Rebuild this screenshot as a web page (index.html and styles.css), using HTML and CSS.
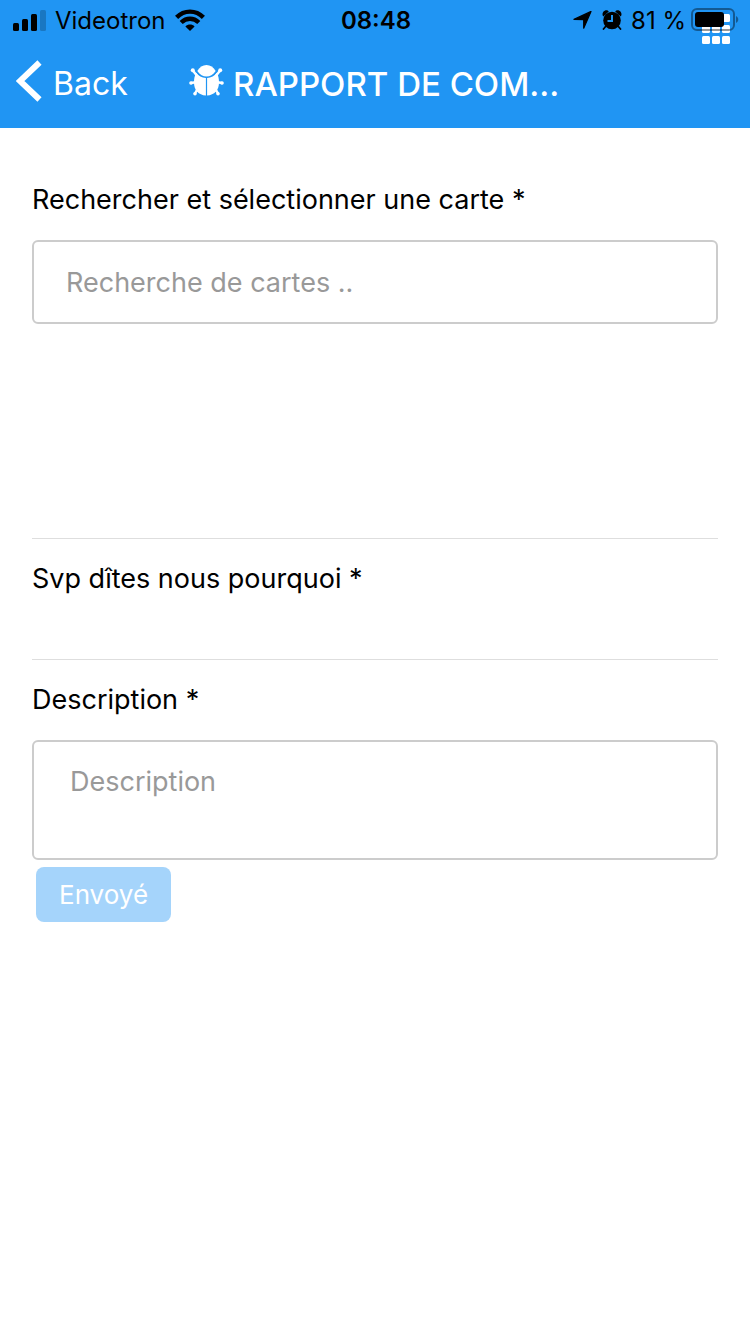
FILE: index.html
```html
<!DOCTYPE html>
<html lang="fr">
<head>
<meta charset="utf-8">
<meta name="viewport" content="width=device-width, initial-scale=1">
<title>Rapport de commentaires</title>
<link rel="stylesheet" href="styles.css">
</head>
<body>
<header class="header">
  <div class="status">
    <div class="status-left">
      <svg class="signal" viewBox="0 0 33 21" aria-hidden="true">
        <rect x="0" y="13" width="6" height="8" rx="1.5"/>
        <rect x="9" y="9" width="6" height="12" rx="1.5"/>
        <rect x="18" y="4" width="6" height="17" rx="1.5"/>
        <rect x="27" y="0" width="6" height="21" rx="1.5" opacity=".2"/>
      </svg>
      <span class="status-text">Videotron</span>
      <svg class="wifi" viewBox="0 0 30 22" aria-hidden="true">
        <g fill="none" stroke="#000" stroke-width="4.400">
          <path d="M1.600 8.400C9.200.7 20.800.7 28.400 8.400"/>
          <path d="M6.200 13.500C11.400 8.500 18.600 8.500 23.800 13.500"/>
        </g>
        <path d="M15 22l-4.600-4.600c2.600-2.600 6.600-2.600 9.200 0z"/>
      </svg>
    </div>
    <time class="status-text clock">08:48</time>
    <div class="status-right">
      <svg class="location" viewBox="0 0 19 18" aria-hidden="true">
        <path d="M18 .4L10.700 17.200V8.600L1 8.400z" stroke="#000" stroke-width="1.200" stroke-linejoin="round"/>
      </svg>
      <svg class="alarm" viewBox="0 0 20 20" aria-hidden="true">
        <path d="M1.300 6.500C-.2 4.500.5 1.700 2.700.7 4.300 0 5.900.4 6.800 1.600zM18.700 6.500c1.500-2 .8-4.800-1.400-5.800-1.600-.7-3.200-.3-4.100.9z"/>
        <circle cx="10" cy="10.500" r="8.800"/>
        <path d="M4 16l-2.500 3M16 16l2.500 3" stroke="#000" stroke-width="1.800" stroke-linecap="round"/>
        <path class="alarm-hands" d="M10 5v6H5.500"/>
      </svg>
      <span class="status-text percent">81 %</span>
      <svg class="battery" viewBox="0 0 48 24" aria-hidden="true">
        <rect x="1" y="1" width="42" height="21" rx="5" fill="none" stroke="#000" stroke-width="2" opacity=".4"/>
        <rect x="4" y="4" width="29" height="15" rx="3"/>
        <path d="M45 8c3 1.500 3 5.500 0 7z" opacity=".4"/>
      </svg>
    </div>
  </div>
  <nav class="nav">
    <button class="back" type="button">
      <svg class="chevron" viewBox="0 0 26 42" aria-hidden="true"><path d="M23.500 2.500L4 21l19.500 18.500"/></svg>
      Back
    </button>
    <h1 class="title">
      <svg class="bug" viewBox="0 0 35 31" aria-hidden="true">
        <g fill="none" stroke="#fff" stroke-width="2.400" stroke-linecap="round">
          <path d="M9 12L3.800 5.500M26 12l5.200-6.500M8 17L2 18M27 17l6 1M9.500 22L6 28.500M25.500 22l3.500 6.500"/>
        </g>
        <g fill="#fff">
          <circle cx="3.800" cy="5.200" r="2"/><circle cx="31.200" cy="5.200" r="2"/>
          <circle cx="2" cy="18" r="1.800"/><circle cx="33" cy="18" r="1.800"/>
          <circle cx="6" cy="28.800" r="1.800"/><circle cx="29" cy="28.800" r="1.800"/>
          <path d="M8.300 6C10.500 2 13.700 0 17.500 0s7 2 9.200 6c-2.700 3.800-5.700 5.600-9.200 5.600S11 9.800 8.300 6z"/>
          <path d="M7.200 7.700c2.400 3.300 5.600 5 9.700 5.200V30.600C9.500 30 5 25 5 17.500c0-4 .6-7 2.200-9.800zM27.800 7.700c-2.400 3.300-5.600 5-9.700 5.200V30.600C25.500 30 30 25 30 17.500c0-4-.6-7-2.200-9.800z"/>
        </g>
      </svg>
      <span class="title-text">RAPPORT DE COM...</span>
    </h1>
  </nav>
  <button class="menu" type="button" aria-label="Menu">
    <svg class="menu-icon" viewBox="0 0 28 30" aria-hidden="true">
      <rect x="0" y="0" width="8" height="8" rx="1.500"/><rect x="10" y="0" width="8" height="8" rx="1.500"/><rect x="20" y="0" width="8" height="8" rx="1.500"/>
      <rect x="0" y="11" width="8" height="8" rx="1.500"/><rect x="10" y="11" width="8" height="8" rx="1.500"/><rect x="20" y="11" width="8" height="8" rx="1.500"/>
      <rect x="0" y="22" width="8" height="8" rx="1.500"/><rect x="10" y="22" width="8" height="8" rx="1.500"/><rect x="20" y="22" width="8" height="8" rx="1.500"/>
    </svg>
  </button>
</header>
<main>
  <form class="form">
    <section class="group group-search">
      <label class="label" for="card">Rechercher et sélectionner une carte *</label>
      <input class="field" id="card" type="text" placeholder="Recherche de cartes ..">
    </section>
    <section class="group group-reason">
      <h2 class="label">Svp dîtes nous pourquoi *</h2>
    </section>
    <section class="group">
      <label class="label" for="description">Description *</label>
      <textarea class="field area" id="description" placeholder="Description"></textarea>
    </section>
    <button class="submit" type="submit" disabled>Envoyé</button>
  </form>
</main>
</body>
</html>
```

FILE: styles.css
```css
* { box-sizing: border-box; }

body {
  margin: 0;
  background: #fff;
  color: #000;
  font-family: Inter, "Liberation Sans", sans-serif;
}

button, input, textarea { font: inherit; }
svg { display: block; flex: none; }

.header {
  position: relative;
  background: #2095f3;
}

.status {
  position: relative;
  z-index: 1;
  display: grid;
  grid-template-columns: 1fr auto 1fr;
  align-items: center;
  height: 40px;
  padding: 0 11px 0 13px;
  font-size: 24px;
  line-height: 38px;
  pointer-events: none;
}

.status-left, .status-right {
  display: flex;
  align-items: center;
}

.status-left { gap: 9px; }
.status-right { justify-content: flex-end; }
.status-text { padding-top: 2px; }
.signal { width: 33px; height: 21px; }
.wifi { width: 30px; height: 22px; }
.clock { font-weight: 600; }
.location { width: 19px; height: 18px; margin-right: 10px; }
.alarm { width: 20px; height: 20px; margin-right: 9px; }
.alarm-hands { fill: none; stroke: #2095f3; stroke-width: 2; }
.percent { margin-right: 5px; }
.battery { width: 48px; height: 24px; }

.nav {
  display: flex;
  align-items: center;
  height: 88px;
  padding: 0 16px;
  color: #fff;
}

.back {
  display: flex;
  align-items: center;
  gap: 11px;
  width: 173px;
  padding: 0;
  border: 0;
  background: none;
  color: inherit;
  font-size: 32px;
  line-height: 42px;
}

.chevron {
  width: 26px;
  height: 42px;
  margin-bottom: 6px;
  fill: none;
  stroke: #fff;
  stroke-width: 6;
}

.title {
  display: flex;
  align-items: center;
  gap: 9px;
  min-width: 0;
  margin: 0;
  font-size: 33px;
  font-weight: 500;
  line-height: 42px;
  white-space: nowrap;
}

.bug { width: 35px; height: 31px; margin-bottom: 8px; }

.menu {
  position: absolute;
  top: 14px;
  right: 20px;
  padding: 0;
  border: 0;
  background: none;
}

.menu-icon { width: 28px; height: 30px; fill: #fff; }

.form { padding: 32px 32px 0; }

.group { padding-top: 20px; }

.group + .group { border-top: 1px solid #dedede; }

.group-search { padding-bottom: 214px; }
.group-reason { padding-bottom: 60px; }

.label {
  display: block;
  margin: 0;
  font-size: 27px;
  font-weight: 400;
  line-height: 40px;
}

.field {
  display: block;
  width: 100%;
  height: 84px;
  margin-top: 20px;
  padding: 0 32px;
  border: 2px solid #ccc;
  border-radius: 6px;
  background: #fff;
  font-size: 27px;
  line-height: 40px;
}

.field::placeholder { color: #999; opacity: 1; }

.area {
  height: 120px;
  padding: 20px 36px;
  resize: none;
}

.submit {
  display: block;
  margin: 7px 4px;
  padding: 0 23px;
  border: 0;
  border-radius: 8px;
  background: #a5d4fb;
  color: #fff;
  font-size: 26px;
  line-height: 55px;
}
```
